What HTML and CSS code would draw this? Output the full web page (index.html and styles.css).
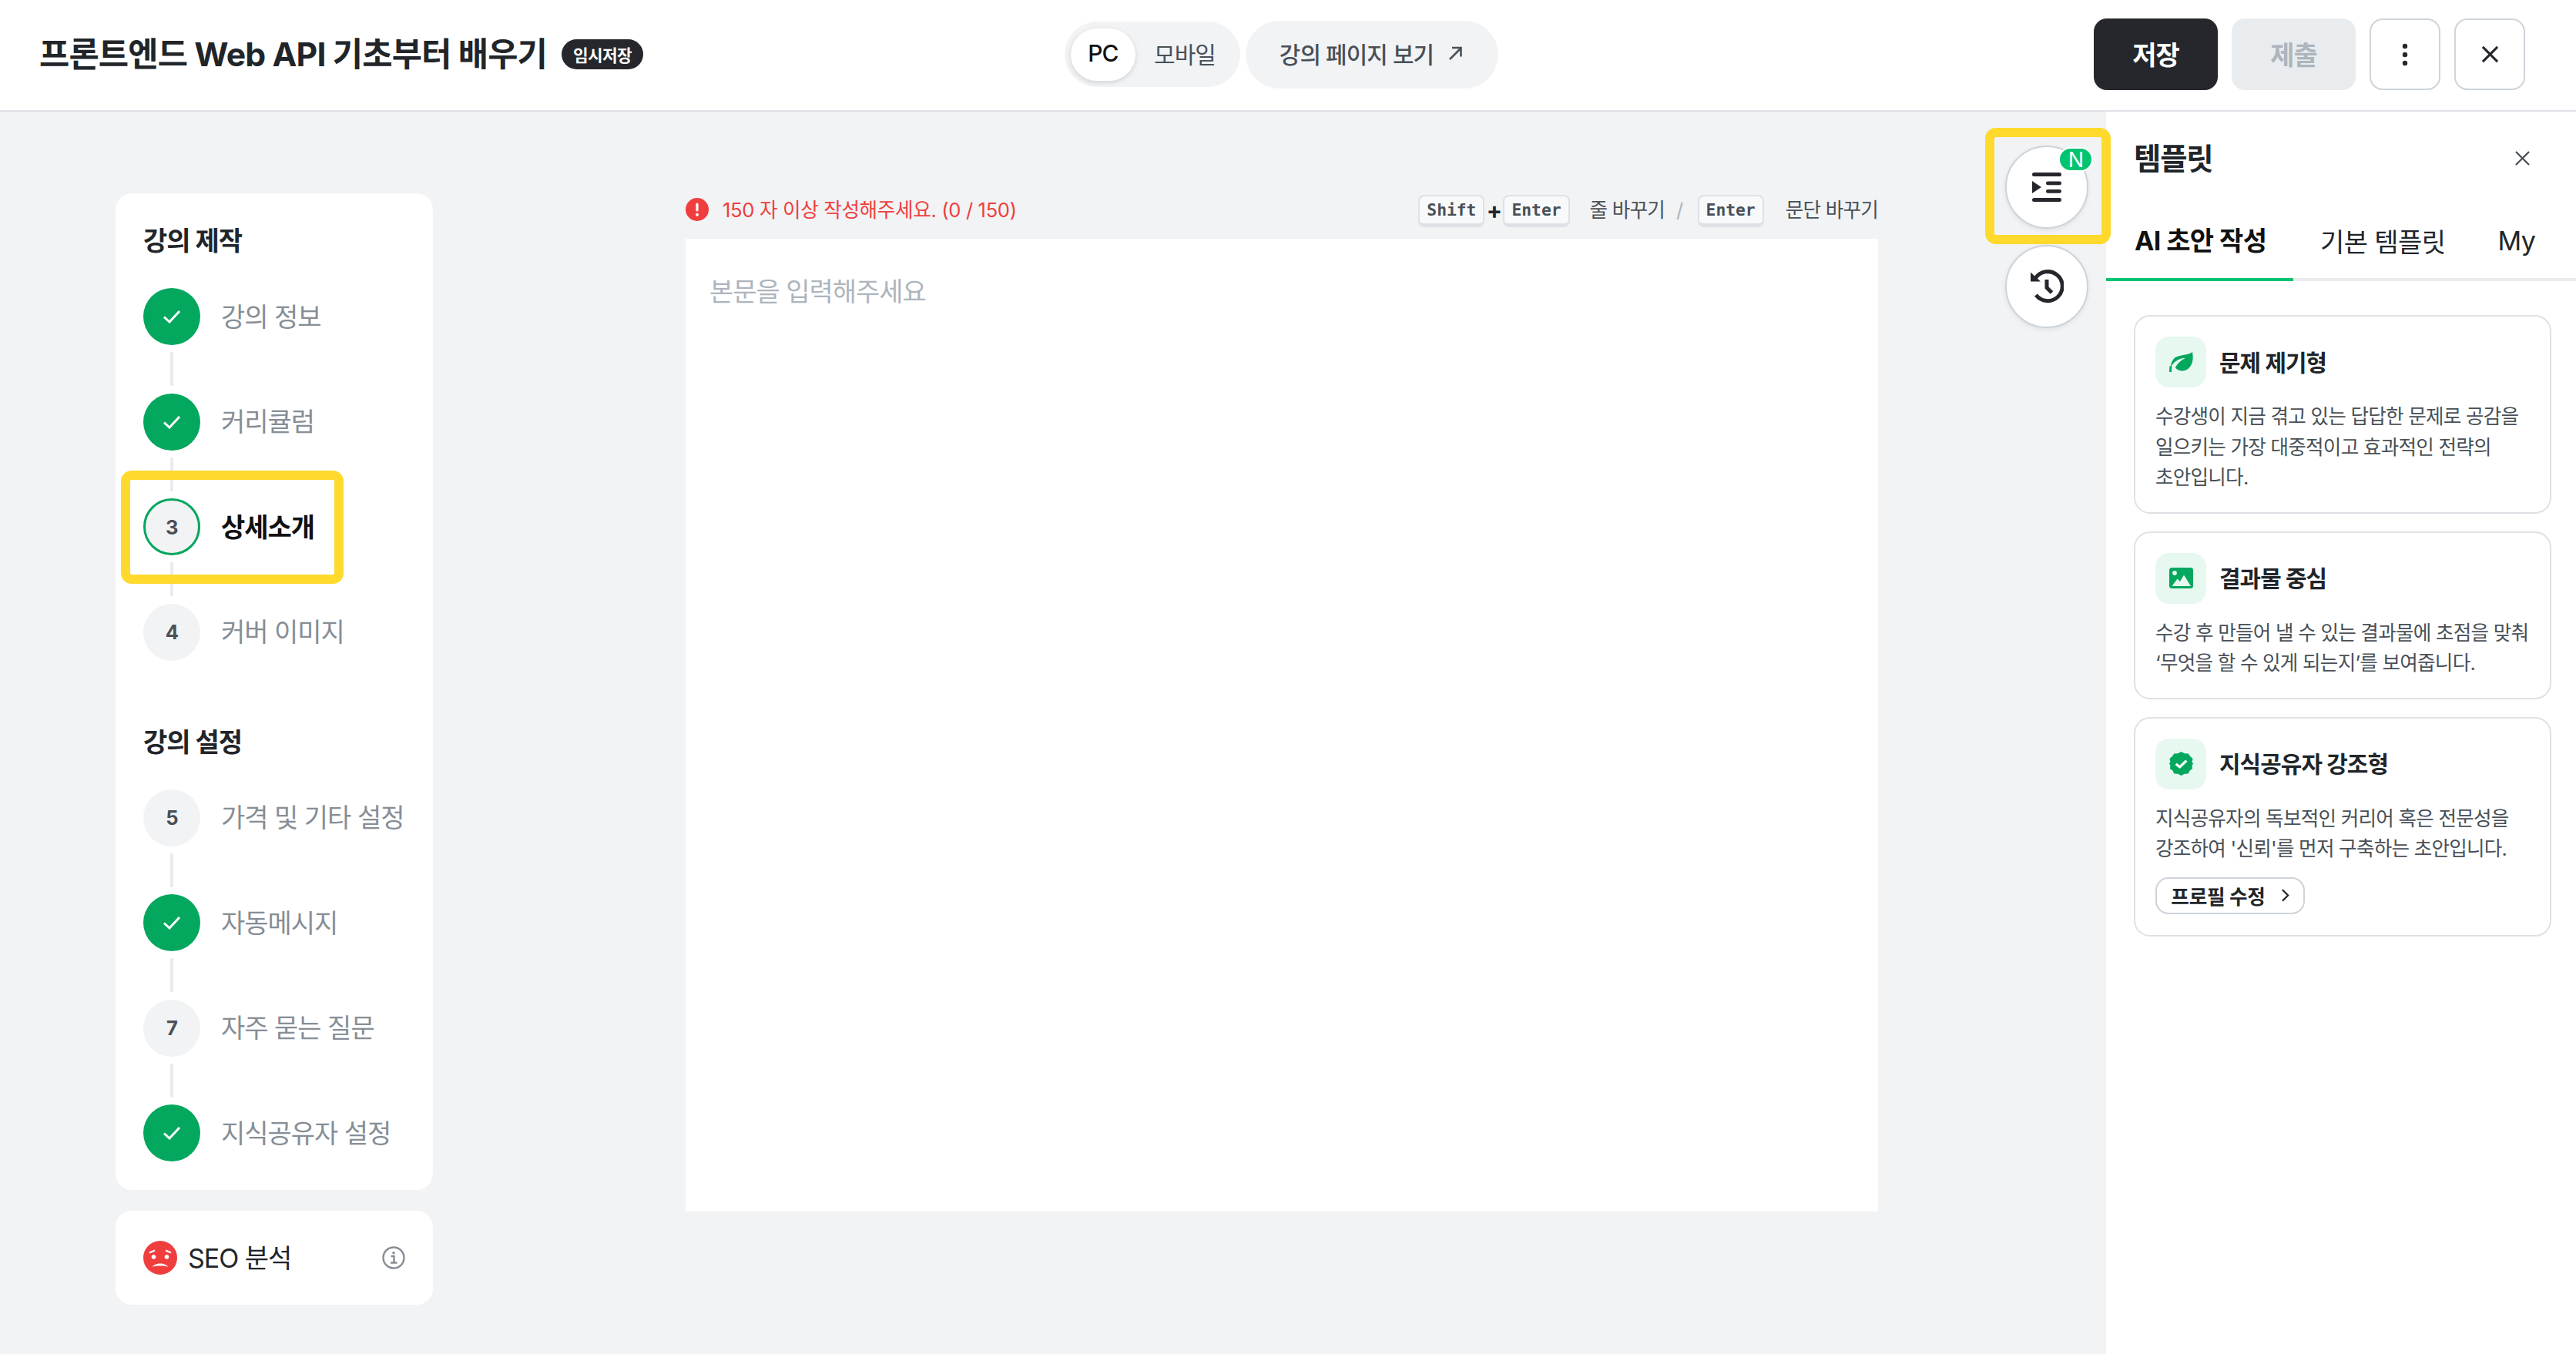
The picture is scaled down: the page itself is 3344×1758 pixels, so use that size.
FILE: index.html
```html
<!DOCTYPE html>
<html lang="ko">
<head>
  <meta charset="UTF-8" />
  <title>강의 제작 - 상세소개</title>
  <link rel="stylesheet" href="styles.css">
</head>
<body>

  <header class="topbar">
    <h1 class="course-title">프론트엔드 Web API 기초부터 배우기</h1>
    <span class="draft-badge">임시저장</span>

    <div class="view-group">
      <div class="view-toggle">
        <span class="view-option active">PC</span>
        <span class="view-option">모바일</span>
      </div>
      <button class="preview-btn">강의 페이지 보기
        <svg class="preview-arrow" viewBox="0 0 20 20"><path d="M3 18 17 4M6 3h11.500v11.500"/></svg>
      </button>
    </div>

    <div class="top-actions">
      <button class="btn btn-save">저장</button>
      <button class="btn btn-submit">제출</button>
      <button class="btn btn-icon">
        <svg class="icon-dots" viewBox="0 0 8 30"><circle cx="4" cy="4" r="3.200"/><circle cx="4" cy="15" r="3.200"/><circle cx="4" cy="26" r="3.200"/></svg>
      </button>
      <button class="btn btn-icon">
        <svg class="icon-close" viewBox="0 0 24 24"><path d="M2 2 22 22M22 2 2 22"/></svg>
      </button>
    </div>
  </header>

  <div class="workspace">
    <aside class="sidebar">
      <nav class="steps-card">
        <div class="section-title">강의 제작</div>
        <div class="step">
          <span class="dot done"><svg viewBox="0 0 24 18"><path d="M2 9.500 9 16 22 2"/></svg></span>
          <span class="label">강의 정보</span>
        </div>
        <div class="step-line"></div>
        <div class="step">
          <span class="dot done"><svg viewBox="0 0 24 18"><path d="M2 9.500 9 16 22 2"/></svg></span>
          <span class="label">커리큘럼</span>
        </div>
        <div class="step-line"></div>
        <div class="step current">
          <span class="dot">3</span>
          <span class="label">상세소개</span>
          <span class="mark mark-step"></span>
        </div>
        <div class="step-line"></div>
        <div class="step">
          <span class="dot">4</span>
          <span class="label">커버 이미지</span>
        </div>

        <div class="section-title second">강의 설정</div>
        <div class="step">
          <span class="dot">5</span>
          <span class="label">가격 및 기타 설정</span>
        </div>
        <div class="step-line"></div>
        <div class="step">
          <span class="dot done"><svg viewBox="0 0 24 18"><path d="M2 9.500 9 16 22 2"/></svg></span>
          <span class="label">자동메시지</span>
        </div>
        <div class="step-line"></div>
        <div class="step">
          <span class="dot">7</span>
          <span class="label">자주 묻는 질문</span>
        </div>
        <div class="step-line"></div>
        <div class="step">
          <span class="dot done"><svg viewBox="0 0 24 18"><path d="M2 9.500 9 16 22 2"/></svg></span>
          <span class="label">지식공유자 설정</span>
        </div>
      </nav>

      <div class="seo-card">
        <svg class="seo-face" viewBox="0 0 44 44">
          <circle cx="22" cy="22" r="22" fill="#f03e3e"/>
          <path d="M8 15.500 15 12.500M36 15.500 29 12.500" class="face-line"/>
          <circle cx="13.500" cy="21" r="2.800" fill="#fff"/>
          <circle cx="30.500" cy="21" r="2.800" fill="#fff"/>
          <path d="M12 34c3-6 17-6 20 0-4-2-16-2-20 0Z" fill="#fff"/>
        </svg>
        <span class="seo-text">SEO 분석</span>
        <svg class="seo-info" viewBox="0 0 30 30">
          <circle cx="15" cy="15" r="13.500"/>
          <path d="M11.500 13H15.500V21M11 21.500H19.500"/>
          <circle cx="15" cy="8.800" r="1.800" class="info-dot"/>
        </svg>
      </div>
    </aside>

    <main class="editor-col">
      <div class="editor-bar">
        <svg class="error-icon" viewBox="0 0 30 30">
          <circle cx="15" cy="15" r="15" fill="#f03e3e"/>
          <rect x="13.400" y="6.500" width="3.200" height="11" rx="1.600" fill="#fff"/>
          <circle cx="15" cy="21.800" r="2" fill="#fff"/>
        </svg>
        <span class="error-text">150 자 이상 작성해주세요. (0 / 150)</span>
        <div class="shortcuts">
          <kbd>Shift</kbd><span class="plus">+</span><kbd>Enter</kbd>
          <span class="shortcut-text first">줄 바꾸기</span>
          <span class="slash">/</span>
          <kbd>Enter</kbd>
          <span class="shortcut-text">문단 바꾸기</span>
        </div>
      </div>
      <div class="editor">본문을 입력해주세요</div>
    </main>

    <div class="float-col">
      <button class="float-btn">
        <svg class="icon-indent" viewBox="0 0 38 38">
          <rect width="38" height="5" rx="2.500"/>
          <rect x="18" y="11.500" width="20" height="4.800" rx="2.400"/>
          <rect x="18" y="22" width="20" height="4.800" rx="2.400"/>
          <rect y="33" width="38" height="5" rx="2.500"/>
          <path d="M0 11 12 19 0 27Z"/>
        </svg>
        <span class="new-badge">N</span>
        <span class="mark mark-float"></span>
      </button>
      <button class="float-btn">
        <svg class="icon-history" viewBox="0 0 44 44">
          <path d="M7.500 11A19 19 0 1 1 8 33" class="history-arc"/>
          <path d="M1 3.500 14 15.500H1Z"/>
          <path d="M22 13V23.500L28.500 30" class="history-arc"/>
        </svg>
      </button>
    </div>

    <section class="panel">
      <div class="panel-head">
        <h2 class="panel-title">템플릿</h2>
        <svg class="panel-close" viewBox="0 0 20 20"><path d="M1 1 19 19M19 1 1 19"/></svg>
      </div>
      <div class="tabs">
        <span class="tab active">AI 초안 작성</span>
        <span class="tab tab-basic">기본 템플릿</span>
        <span class="tab">My</span>
      </div>
      <div class="cards">
        <article class="tpl-card">
          <div class="tpl-head">
            <span class="tpl-icon">
              <svg class="tpl-leaf" viewBox="0 0 32 28">
                <path d="M31 0C26 5 14 3 7 8 3 12 2 16 2 20 7 12 14 8 22 8 16 11 11 15 8 21 11 25 17 27 23 24 31 20 33 10 31 0Z"/>
                <path d="M1.500 27C1.500 24 1.500 22 2 19" class="leaf-stem"/>
              </svg>
            </span>
            <span class="tpl-title">문제 제기형</span>
          </div>
          <p class="tpl-desc">수강생이 지금 겪고 있는 답답한 문제로 공감을<br>일으키는 가장 대중적이고 효과적인 전략의<br>초안입니다.</p>
        </article>
        <article class="tpl-card">
          <div class="tpl-head">
            <span class="tpl-icon">
              <svg class="tpl-image" viewBox="0 0 31 27">
                <rect width="31" height="27" rx="3.500"/>
                <circle cx="7" cy="7" r="2.900" class="tpl-cut"/>
                <path d="M3.500 24 10.500 14.500 14 18 19 9.500 28 24Z" class="tpl-cut"/>
              </svg>
            </span>
            <span class="tpl-title">결과물 중심</span>
          </div>
          <p class="tpl-desc">수강 후 만들어 낼 수 있는 결과물에 초점을 맞춰<br>‘무엇을 할 수 있게 되는지’를 보여줍니다.</p>
        </article>
        <article class="tpl-card">
          <div class="tpl-head">
            <span class="tpl-icon">
              <svg viewBox="0 0 32 36" preserveAspectRatio="none">
                <path d="M16 0 20.500 2.500 25.500 2.800 28 7 31.500 10.500 30.500 15.500 32 18 30.500 21 31 25.500 27.500 28.500 25.500 33 20.500 33.500 16 36 11.500 33.500 6.500 33 4.500 28.500 1 25.500 1.500 21 0 18 1.500 15.500.5 10.500 4 7 6.500 2.800 11.500 2.500Z"/>
                <path d="M9 18.500 14 23 23 13.500" class="badge-check"/>
              </svg>
            </span>
            <span class="tpl-title">지식공유자 강조형</span>
          </div>
          <p class="tpl-desc">지식공유자의 독보적인 커리어 혹은 전문성을<br>강조하여 '신뢰'를 먼저 구축하는 초안입니다.</p>
          <button class="profile-btn">프로필 수정
            <svg viewBox="0 0 12 20"><path d="M2 2 10 10 2 18"/></svg>
          </button>
        </article>
      </div>
    </section>
  </div>

</body>
</html>
```

FILE: styles.css
```css
* {
  box-sizing: border-box;
  letter-spacing: -0.03em;
}

html, body {
  height: 100%;
}

body {
  margin: 0;
  display: flex;
  flex-direction: column;
  overflow: hidden;
  font-family: Inter, "Noto Sans CJK KR", sans-serif;
  background: #f1f3f5;
  color: #212529;
}

button {
  font-family: inherit;
  cursor: pointer;
}

/* top bar */
.topbar {
  flex: none;
  height: 145px;
  display: flex;
  align-items: center;
  padding: 0 66px 2px 51px;
  background: #fff;
  border-bottom: 2px solid #dee2e6;
}

.course-title {
  margin: 0;
  padding-bottom: 8px;
  font-size: 42.700px;
  font-weight: 700;
  letter-spacing: -0.85px;
  white-space: nowrap;
}

.draft-badge {
  margin-left: 19px;
  height: 39px;
  width: 106px;
  display: flex;
  align-items: center;
  justify-content: center;
  border-radius: 20px;
  background: #25272c;
  color: #fff;
  font-size: 21.300px;
  font-weight: 700;
}

.view-group {
  position: absolute;
  left: 1382px;
  display: flex;
  align-items: center;
  gap: 7px;
}

.view-toggle {
  height: 85px;
  width: 228px;
  display: flex;
  align-items: center;
  padding: 0 8px;
  border-radius: 43px;
  background: #f1f3f5;
}

.view-option {
  width: 84px;
  height: 68px;
  padding-bottom: 3px;
  display: flex;
  align-items: center;
  justify-content: center;
  font-size: 29.900px;
  color: #495057;
}

.view-option + .view-option {
  width: 128px;
}

.view-option.active {
  background: #fff;
  border-radius: 34px;
  color: #111;
  font-weight: 500;
  box-shadow: 0 2px 6px rgba(0,0,0,0.14);
}

.preview-btn {
  height: 88px;
  width: 328px;
  padding: 0 2px 3px 0;
  display: flex;
  align-items: center;
  justify-content: center;
  gap: 18px;
  border: none;
  border-radius: 44px;
  background: #f1f3f5;
  color: #495057;
  font-size: 29.900px;
  font-weight: 500;
}

.preview-arrow {
  width: 20px;
  height: 20px;
  fill: none;
  stroke: #495057;
  stroke-width: 2.600;
}

.top-actions {
  margin-left: auto;
  display: flex;
  gap: 18px;
}

.btn {
  height: 93px;
  width: 161px;
  padding: 0 0 3px;
  display: flex;
  align-items: center;
  justify-content: center;
  border: none;
  border-radius: 17px;
  font-size: 34px;
  font-weight: 700;
}

.btn-save {
  background: #25272c;
  color: #fff;
}

.btn-submit {
  background: #e9ecef;
  color: #adb5bd;
}

.btn-icon {
  width: 92px;
  padding: 0;
  background: #fff;
  border: 2px solid #ced4da;
}

.icon-dots {
  width: 8px;
  height: 30px;
  fill: #25272c;
}

.icon-close {
  width: 23px;
  height: 23px;
  stroke: #25272c;
  stroke-width: 3.200;
  fill: none;
}

/* workspace */
.workspace {
  flex: 1;
  min-height: 0;
  display: flex;
  align-items: flex-start;
  padding-left: 150px;
}

.sidebar {
  flex: none;
  width: 412px;
  margin-top: 106px;
  display: flex;
  flex-direction: column;
  gap: 27px;
}

.steps-card {
  padding: 40px 36px 37px;
  background: #fff;
  border-radius: 21px;
}

.section-title {
  height: 44px;
  margin-bottom: 39px;
  font-size: 34px;
  line-height: 44px;
  font-weight: 700;
}

.section-title.second {
  margin-top: 84px;
  margin-bottom: 39px;
}

.step {
  position: relative;
  display: flex;
  align-items: center;
  gap: 27px;
}

.dot {
  flex: none;
  width: 74px;
  height: 74px;
  display: flex;
  align-items: center;
  justify-content: center;
  border-radius: 50%;
  background: #f1f3f5;
  color: #495057;
  font-size: 25.600px;
  font-weight: 700;
}

.dot.done {
  background: #04a75e;
}

.dot.done svg {
  width: 24px;
  height: 18px;
  fill: none;
  stroke: #fff;
  stroke-width: 3;
}

.current .dot {
  border: 3px solid #04a75e;
}

.label {
  padding-bottom: 4px;
  font-size: 34px;
  font-weight: 400;
  color: #868e96;
  white-space: nowrap;
}

.current .label {
  font-weight: 700;
  color: #111;
}

.step-line {
  width: 4px;
  height: 44px;
  margin: 9px 0 9.500px 35px;
  background: #e9ecef;
}

/* yellow callouts drawn over the page */
.mark {
  position: absolute;
  border: 12px solid #ffda2c;
  border-radius: 14px;
  pointer-events: none;
}

.mark-step {
  left: -29px;
  top: -36px;
  width: 289px;
  height: 147px;
}

.mark-float {
  left: -28px;
  top: -25px;
  width: 163px;
  height: 151px;
}

.seo-card {
  height: 122px;
  display: flex;
  align-items: center;
  padding: 0 36px;
  background: #fff;
  border-radius: 21px;
}

.seo-face {
  width: 44px;
  height: 44px;
}

.face-line {
  stroke: #fff;
  stroke-width: 2.400;
  fill: none;
}

.seo-text {
  margin-left: 14px;
  padding-bottom: 4px;
  font-size: 34px;
}

.seo-info {
  margin-left: auto;
  margin-right: 0;
  width: 30px;
  height: 30px;
  fill: none;
  stroke: #868e96;
  stroke-width: 2.400;
}

.seo-info .info-dot {
  fill: #868e96;
  stroke: none;
}

/* editor */
.editor-col {
  flex: none;
  width: 1548px;
  height: 1428px;
  margin-left: 328px;
  padding-top: 109px;
  display: flex;
  flex-direction: column;
}

.editor-bar {
  height: 56px;
  display: flex;
  align-items: center;
  padding-bottom: 20px;
}

.error-icon {
  width: 30px;
  height: 30px;
  flex: none;
}

.error-text {
  margin-left: 18px;
  padding-bottom: 3px;
  font-size: 25.600px;
  letter-spacing: -0.35px;
  color: #f03e3e;
}

.shortcuts {
  margin-left: auto;
  display: flex;
  align-items: center;
  font-size: 25.600px;
  color: #495057;
}

kbd {
  height: 42px;
  margin-top: 4px;
  padding: 0 9px;
  display: flex;
  align-items: center;
  border: 2px solid #dee2e6;
  border-bottom-width: 5px;
  border-radius: 8px;
  background: #f8f9fa;
  font-family: "DejaVu Sans Mono", monospace;
  font-size: 21.300px;
  font-weight: 700;
  letter-spacing: 0;
  color: #495057;
}

.plus {
  width: 24px;
  margin-top: 2px;
  text-align: center;
  font-size: 30px;
  font-weight: 700;
  color: #212529;
}

.shortcut-text {
  margin-left: 28px;
  padding-bottom: 3px;
}

.shortcut-text.first {
  margin-left: 26px;
}

.slash {
  margin: 0 19px 0 15px;
  color: #adb5bd;
}

.editor {
  flex: 1;
  padding: 47px 31px;
  background: #fff;
  font-size: 34px;
  line-height: 44px;
  color: #adb5bd;
}

/* floating buttons */
.float-col {
  flex: none;
  width: 108px;
  margin: 44px 23px 0 165px;
  display: flex;
  flex-direction: column;
  gap: 21px;
}

.float-btn {
  position: relative;
  width: 108px;
  height: 108px;
  padding: 0;
  display: flex;
  align-items: center;
  justify-content: center;
  border: 2px solid #ced4da;
  border-radius: 50%;
  background: #fff;
  box-shadow: 0 2px 6px rgba(0,0,0,0.08);
}

.icon-indent {
  width: 38px;
  height: 38px;
  fill: #25272c;
}

.icon-history {
  width: 44px;
  height: 44px;
  fill: #25272c;
}

.history-arc {
  fill: none;
  stroke: #25272c;
  stroke-width: 5;
}

.new-badge {
  position: absolute;
  top: 0;
  left: 67px;
  width: 45px;
  height: 32px;
  display: flex;
  align-items: center;
  justify-content: center;
  border: 2px solid #fff;
  border-radius: 16px;
  background: #00c471;
  color: #fff;
  font-size: 27px;
}

/* template panel */
.panel {
  flex: none;
  width: 610px;
  height: 100%;
  background: #fff;
}

.panel-head {
  height: 127px;
  padding: 0 60px 6px 36px;
  display: flex;
  align-items: center;
  justify-content: space-between;
}

.panel-title {
  margin: 0;
  padding-bottom: 5px;
  font-size: 38.400px;
  font-weight: 700;
}

.panel-close {
  width: 19px;
  height: 19px;
  fill: none;
  stroke: #495057;
  stroke-width: 2.400;
}

.tabs {
  height: 93px;
  display: flex;
  border-bottom: 4px solid #e9ecef;
}

.tab {
  height: 93px;
  padding: 0 37px 13px;
  display: flex;
  align-items: center;
  font-size: 34px;
  letter-spacing: -0.6px;
  color: #212529;
  white-space: nowrap;
}

.tab.active {
  width: 243px;
  font-weight: 700;
  color: #111;
  border-bottom: 4px solid #00c471;
}

.tab-basic {
  padding-left: 35px;
  padding-right: 31px;
}

.cards {
  padding: 44px 32px 0 36px;
  display: flex;
  flex-direction: column;
  gap: 23px;
}

.tpl-card {
  padding: 26px 26px 25px 26px;
  border: 2px solid #dee2e6;
  border-radius: 21px;
}

.tpl-head {
  display: flex;
  align-items: center;
  gap: 17px;
}

.tpl-icon {
  width: 66px;
  height: 66px;
  display: flex;
  align-items: center;
  justify-content: center;
  border-radius: 18px;
  background: #e6f8ef;
}

.tpl-icon svg {
  width: 31px;
  height: 31px;
  fill: #04a75e;
}

.tpl-icon .tpl-leaf,
.tpl-icon .tpl-image {
  height: 27px;
}

.tpl-cut {
  fill: #e6f8ef;
}

.leaf-stem {
  fill: none;
  stroke: #04a75e;
  stroke-width: 3;
}

.badge-check {
  fill: none;
  stroke: #fff;
  stroke-width: 3.600;
}

.tpl-title {
  padding-bottom: 3px;
  font-size: 29.900px;
  font-weight: 700;
}

.tpl-desc {
  margin: 18px 0 0;
  font-size: 25.600px;
  line-height: 39.500px;
  color: #495057;
  white-space: nowrap;
}

.profile-btn {
  margin: 17px 0 2px;
  height: 48px;
  width: 194px;
  padding: 0;
  display: flex;
  align-items: center;
  justify-content: center;
  gap: 20px;
  border: 2px solid #ced4da;
  border-radius: 17px;
  background: #fff;
  color: #212529;
  font-size: 25.600px;
  font-weight: 700;
  letter-spacing: -0.25px;
}

.profile-btn svg {
  width: 11px;
  height: 19px;
  fill: none;
  stroke: #212529;
  stroke-width: 2.400;
}
```
